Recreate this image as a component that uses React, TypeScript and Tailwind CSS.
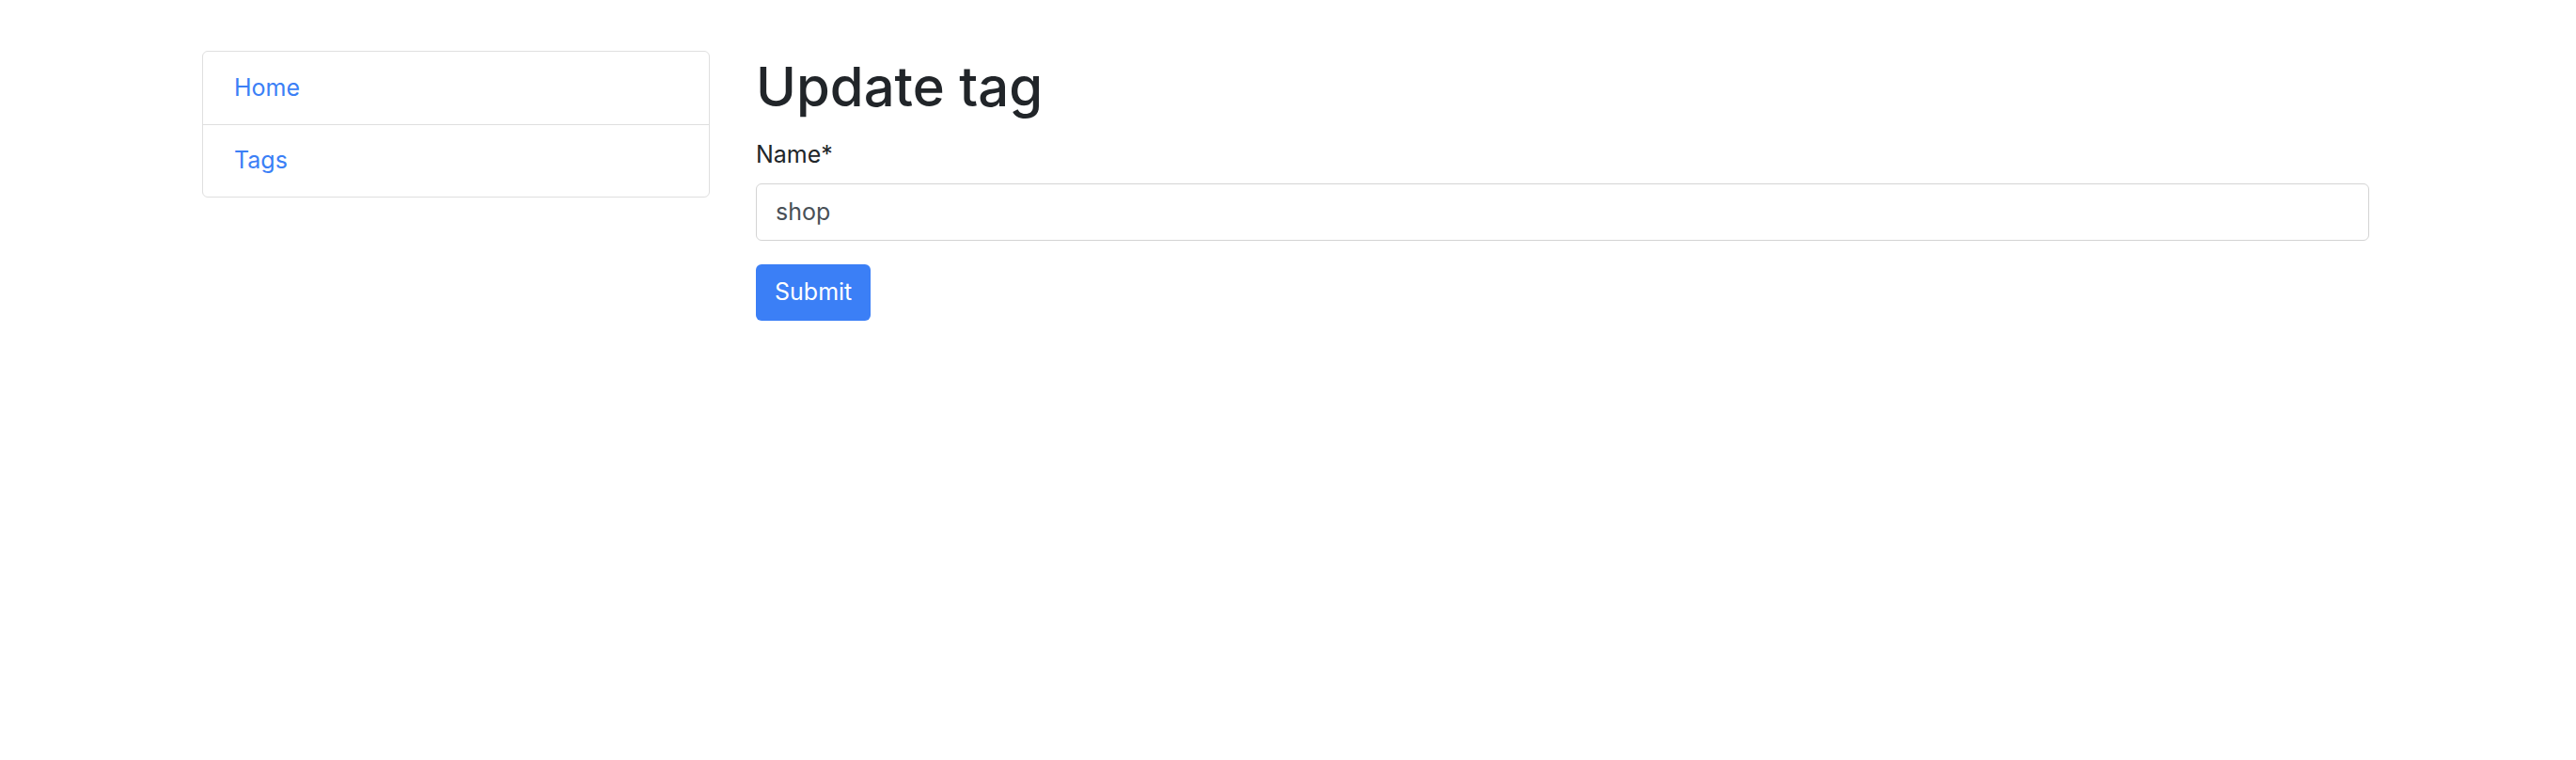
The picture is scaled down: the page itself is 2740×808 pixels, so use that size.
import React, { useState } from "react";

const links = ["Home", "Tags"];

export default function App() {
  const [name, setName] = useState("shop");

  return (
    <div
      className="min-h-screen bg-white flex items-start pl-[215px] pr-[220px] pt-[54px] gap-[49px]"
      style={{ fontFamily: "Inter, 'Liberation Sans', sans-serif" }}
    >
      <nav className="w-[540px] shrink-0 flex flex-col border border-[#dfdfdf] rounded-[6px]">
        {links.map((link, i) => (
          <a
            key={link}
            href="#"
            className={
              "flex items-center h-[77px] px-[33px] text-[25px] text-[#3b7ff6]" +
              (i > 0 ? " border-t border-[#dfdfdf]" : "")
            }
          >
            {link}
          </a>
        ))}
      </nav>

      <main className="flex-1 flex flex-col">
        <h1 className="text-[58px] leading-[1.2] font-medium text-[#212529] pt-[4px] mb-[17px]">
          Update tag
        </h1>
        <label className="text-[25px] leading-[38px] text-[#212529] mb-[12px]">
          Name*
        </label>
        <input
          value={name}
          onChange={(e) => setName(e.target.value)}
          className="h-[61px] w-full border border-[#d4d4d4] rounded-[6px] px-[20px] text-[25px] text-[#495057] outline-none"
        />
        <div className="mt-[25px]">
          <button className="h-[60px] px-[20px] rounded-[6px] bg-[#3b7ff6] text-white text-[25px]">
            Submit
          </button>
        </div>
      </main>
    </div>
  );
}
